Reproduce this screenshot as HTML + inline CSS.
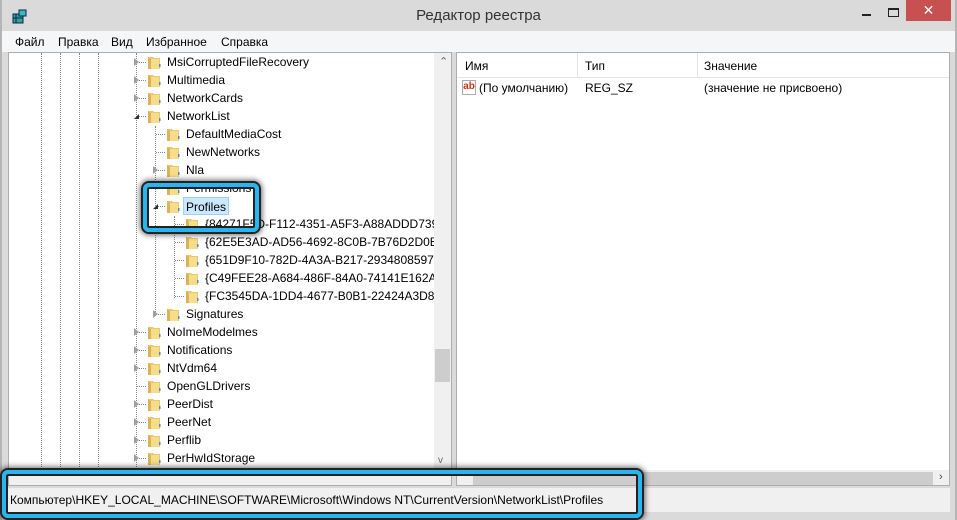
<!DOCTYPE html>
<html><head><meta charset="utf-8"><style>
*{margin:0;padding:0;box-sizing:border-box}
body{width:957px;height:520px;overflow:hidden;background:#dadada;font-family:"Liberation Sans","DejaVu Sans",sans-serif;font-size:12px;color:#000;position:relative}
.a{position:absolute}
.title{left:0;top:0;width:957px;height:31px;text-align:center;line-height:31px;font-size:15px;color:#333}
.menu{left:2px;top:31px;width:953px;height:21px;background:#f5f6f7}
.menu span{position:absolute;top:4px;font-size:12px}
.lp{left:8px;top:52px;width:444px;height:434px;background:#fff;border:1px solid #adadad;overflow:hidden}
.rp{left:456px;top:52px;width:494px;height:434px;background:#fff;border:1px solid #adadad;overflow:hidden}
.row{position:absolute;height:18px;line-height:18px;white-space:nowrap}
.dv{position:absolute;width:0;border-left:1px dotted #888}
.dh{position:absolute;height:0;border-top:1px dotted #888;width:8px}
.ex{position:absolute;width:0;height:0;border-top:4px solid transparent;border-bottom:4px solid transparent;border-left:5px solid #a0a0a0}
.exo{position:absolute;width:0;height:0;border-left:5px solid transparent;border-bottom:5px solid #333}
.f{position:absolute;width:14px;height:16px}
.status{left:8px;top:488px;width:942px;height:24px;background:#f0f0f0}
</style></head><body>
<div class="a" style="left:0;top:0;width:2px;height:520px;background:#b5b5b5"></div>
<div class="a" style="right:0;top:0;width:2px;height:520px;background:#b5b5b5"></div>
<div class="a title">Редактор реестра</div>
<svg class="a" style="left:12px;top:9px" width="16" height="15"><rect x="1" y="5" width="10" height="9" fill="#2aa8a0" stroke="#124" stroke-width="1"/><rect x="7" y="1" width="7" height="6" fill="#38b8c0" stroke="#124"/><line x1="4" y1="5" x2="4" y2="14" stroke="#124"/><line x1="1" y1="9" x2="11" y2="9" stroke="#124"/></svg>
<div class="a" style="left:862px;top:14px;width:9px;height:2px;background:#222"></div>
<div class="a" style="left:888px;top:8px;width:11px;height:9px;border:1px solid #222;border-top-width:2px"></div>
<div class="a" style="left:906px;top:0;width:45px;height:21px;background:#c75050;color:#fff;text-align:center;line-height:21px;font-size:14px">✕</div>
<div class="a menu"><span style="left:13px">Файл</span><span style="left:56px">Правка</span><span style="left:109px">Вид</span><span style="left:144px">Избранное</span><span style="left:219px">Справка</span></div>

<div class="a lp">
<div class="dv" style="left:32px;top:0;height:434px"></div>
<div class="dv" style="left:51px;top:0;height:434px"></div>
<div class="dv" style="left:70px;top:0;height:434px"></div>
<div class="dv" style="left:89px;top:0;height:434px"></div>
<div class="dv" style="left:127px;top:0;height:434px"></div>
<div class="dv" style="left:146px;top:73px;height:190px"></div>
<div class="dv" style="left:165px;top:163px;height:82px"></div>
<div id="tree"></div>
<div class="a" style="left:425px;top:0;width:17px;height:417px;background:#f0f0f0"></div>
<div class="a" style="left:430px;top:2px;color:#666;font-size:11px">⌃</div>
<div class="a" style="left:426px;top:296px;width:15px;height:33px;background:#cdcdcd"></div>
<div class="a" style="left:429px;top:402px;color:#666;font-size:10px">v</div>
<div class="a" style="left:0;top:417px;width:442px;height:17px;background:#f0f0f0"></div>
</div>

<div class="a rp">
<div class="a" style="left:0;top:0;width:494px;height:25px;border-bottom:1px solid #e5e5e5"></div>
<div class="a" style="left:120px;top:0;height:25px;border-left:1px solid #e5e5e5"></div>
<div class="a" style="left:240px;top:0;height:25px;border-left:1px solid #e5e5e5"></div>
<div class="a" style="left:8px;top:6px">Имя</div>
<div class="a" style="left:128px;top:6px">Тип</div>
<div class="a" style="left:247px;top:6px">Значение</div>
<div class="a" style="left:5px;top:27px;width:14px;height:15px;border:1px solid #aaa;background:#fff;color:#d03010;font-weight:bold;font-size:10px;line-height:11px;text-align:center">ab</div>
<div class="a" style="left:22px;top:28px">(По умолчанию)</div>
<div class="a" style="left:128px;top:28px">REG_SZ</div>
<div class="a" style="left:247px;top:28px">(значение не присвоено)</div>
<div class="a" style="left:0;top:417px;width:494px;height:17px;background:#f0f0f0"></div>
<div class="a" style="left:16px;top:419px;width:460px;height:13px;background:#cdcdcd"></div>
<div class="a" style="left:482px;top:418px;color:#444;font-size:11px">›</div>
</div>

<div class="a status"><div class="a" style="left:2px;top:5px;font-size:12px">Компьютер\HKEY_LOCAL_MACHINE\SOFTWARE\Microsoft\Windows NT\CurrentVersion\NetworkList\Profiles</div></div>
<div class="a" style="left:2px;top:470px;width:640px;height:48px;border:4px solid #29b6f0;border-radius:6px;box-shadow:0 0 0 2px #222,inset 0 0 0 2px #222,0 0 6px 3px rgba(0,0,0,.6)"></div>
<div class="a" style="left:143px;top:183px;width:116px;height:49px;border:4px solid #29b6f0;border-radius:6px;box-shadow:0 0 0 2px #222,inset 0 0 0 2px #222,0 0 6px 3px rgba(0,0,0,.6)"></div>

<script>
var rows=[
[0,62,'MsiCorruptedFileRecovery',1],[0,80,'Multimedia',1],[0,98,'NetworkCards',1],[0,116,'NetworkList',2],
[1,134,'DefaultMediaCost',0],[1,152,'NewNetworks',0],[1,170,'Nla',1],[1,188,'Permissions',0],[1,206,'Profiles',2],
[2,224,'{84271F5D-F112-4351-A5F3-A88ADDD739FE}',0],[2,242,'{62E5E3AD-AD56-4692-8C0B-7B76D2D0E18C}',0],[2,260,'{651D9F10-782D-4A3A-B217-293480859797}',0],[2,278,'{C49FEE28-A684-486F-84A0-74141E162A31}',0],[2,296,'{FC3545DA-1DD4-4677-B0B1-22424A3D83C1}',0],
[1,314,'Signatures',1],[0,332,'NoImeModelmes',1],[0,350,'Notifications',1],[0,368,'NtVdm64',1],[0,386,'OpenGLDrivers',0],[0,404,'PeerDist',1],[0,422,'PeerNet',1],[0,440,'Perflib',1],[0,458,'PerHwIdStorage',1]];
var h='';
rows.forEach(function(r){
 var lv=r[0],y=r[1]-53,xt=158+lv*19,ex=125+lv*19;
 var t=y-9;
 var fx=138+lv*19;
 h+='<div class="dh" style="left:'+(ex+3)+'px;top:'+(y)+'px;width:9px"></div>';
 if(r[3]==1)h+='<div class="ex" style="left:'+ex+'px;top:'+(y-4)+'px"></div>';
 if(r[3]==2)h+='<div class="exo" style="left:'+ex+'px;top:'+(y-2)+'px"></div>';
 h+='<svg class="f" style="left:'+fx+'px;top:'+(y-8)+'px" viewBox="0 0 14 16"><path d="M1 3h5l1 1h6v11H1z" fill="#e8c870"/><path d="M3 5h9v10H3z" fill="#f7dc8a"/><path d="M1 3v12h3V5z" fill="#d9b355"/><rect x="12" y="10" width="1.5" height="3" fill="#4a8ad0"/></svg>';
 var st=r[2]=='Profiles'?'background:#cce8ff;border:1px solid #99d1ff;padding:0 2px;':'padding:0 3px;';
 h+='<div class="row" style="left:'+(xt-3)+'px;top:'+t+'px;'+st+'">'+r[2]+'</div>';
});
document.getElementById('tree').innerHTML=h;
</script>
</body></html>
